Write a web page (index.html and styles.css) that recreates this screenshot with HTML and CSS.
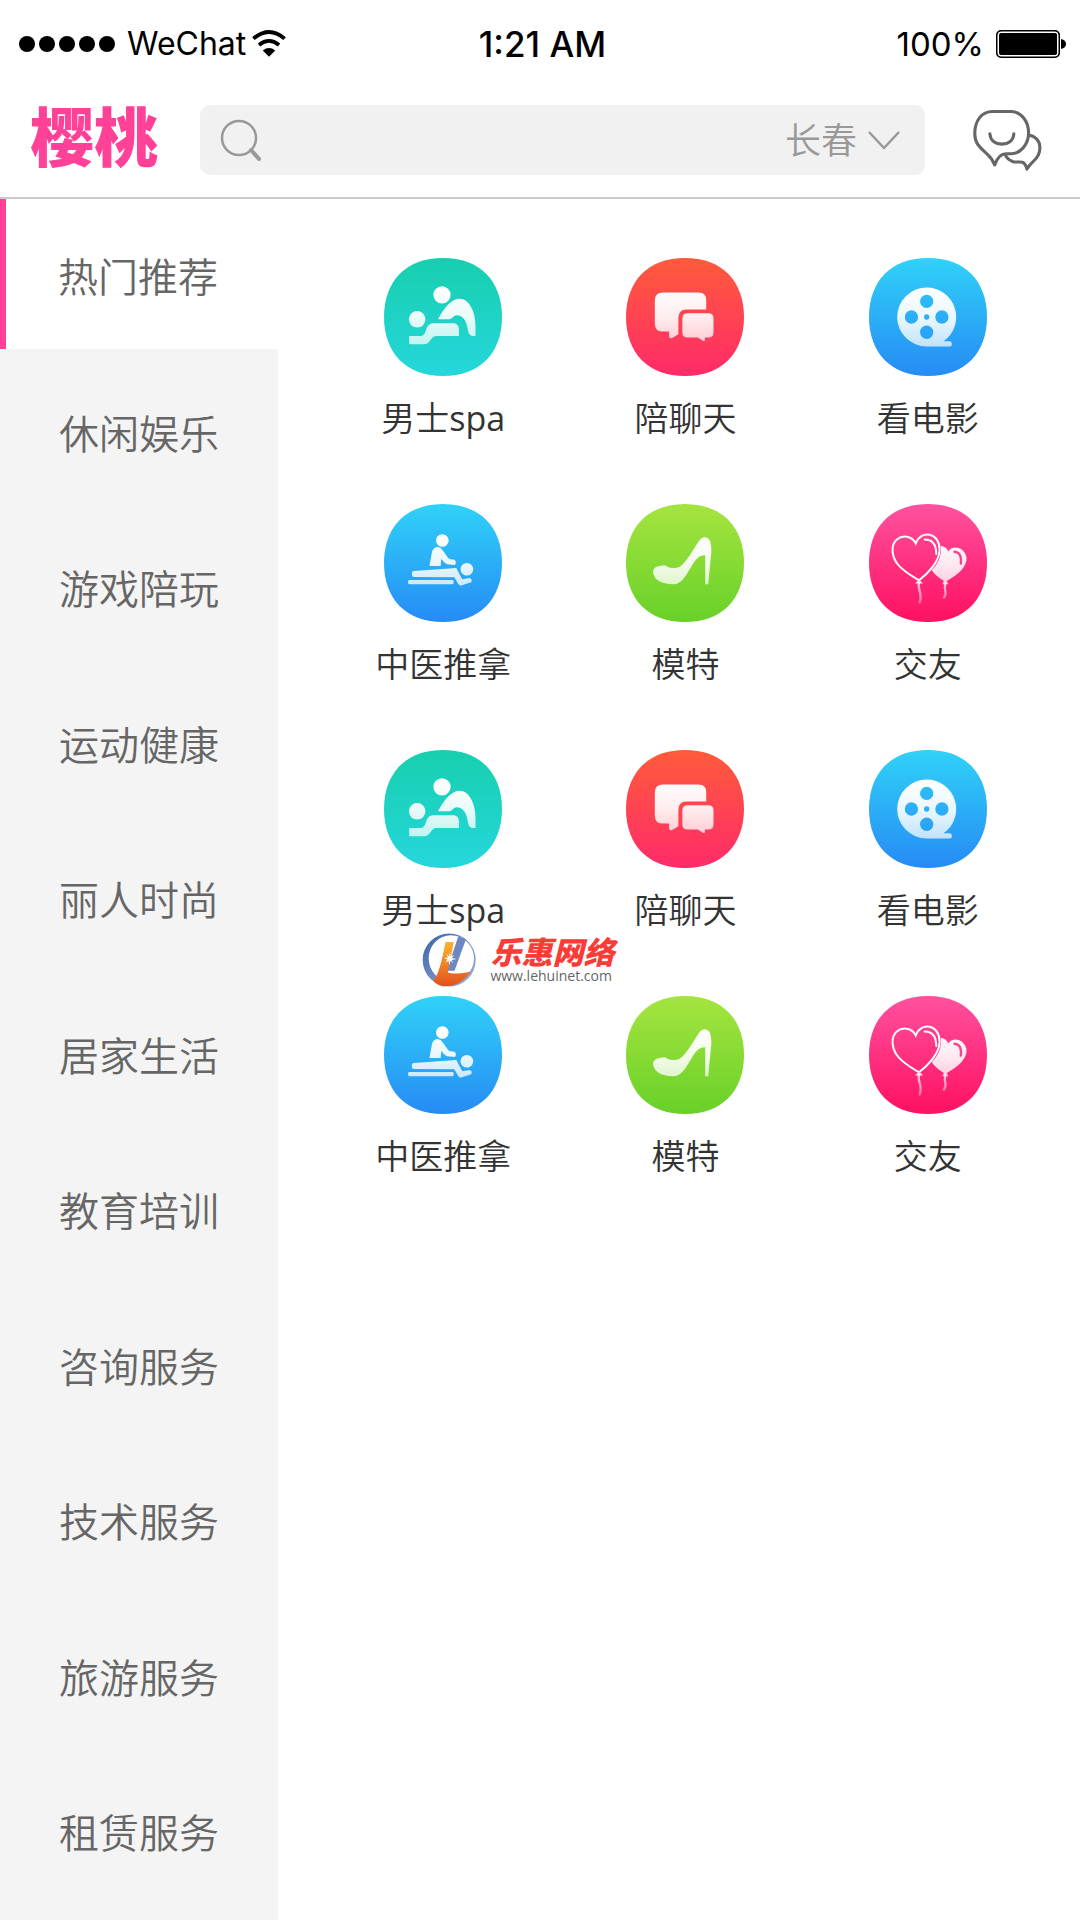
FILE: index.html
```
<!DOCTYPE html>
<html lang="zh-CN">
<head>
    <meta charset="UTF-8">
    <meta name="viewport" content="width=device-width, initial-scale=1.0">
    <title>樱桃</title>
    <link rel="stylesheet" href="styles.css">
</head>
<body>

    <!-- icon definitions -->
    <svg class="defs" width="0" height="0" aria-hidden="true">
        <defs>
            <linearGradient id="teal" x1="0" y1="0" x2="0" y2="1"><stop offset="0" stop-color="#17cfae"/><stop offset="1" stop-color="#25d7dc"/></linearGradient>
            <linearGradient id="red" x1="0" y1="0" x2="0" y2="1"><stop offset="0" stop-color="#ff5b3b"/><stop offset="1" stop-color="#ff2b69"/></linearGradient>
            <linearGradient id="blue" x1="0" y1="0" x2="0" y2="1"><stop offset="0" stop-color="#30d2f8"/><stop offset="1" stop-color="#268bf5"/></linearGradient>
            <linearGradient id="green" x1="0" y1="0" x2="0" y2="1"><stop offset="0" stop-color="#a6e440"/><stop offset="1" stop-color="#68d128"/></linearGradient>
            <linearGradient id="pink" x1="0" y1="0" x2="0" y2="1"><stop offset="0" stop-color="#ff529e"/><stop offset="1" stop-color="#ff1062"/></linearGradient>
            <linearGradient id="glyph" gradientUnits="userSpaceOnUse" x1="0" y1="90" x2="0" y2="270"><stop offset="0" stop-color="#fff"/><stop offset=".5" stop-color="#fff" stop-opacity=".9"/><stop offset="1" stop-color="#fff" stop-opacity=".7"/></linearGradient>
            <linearGradient id="string" gradientUnits="userSpaceOnUse" x1="0" y1="230" x2="0" y2="300"><stop offset="0" stop-color="#fff" stop-opacity=".8"/><stop offset="1" stop-color="#fff" stop-opacity=".35"/></linearGradient>
            <linearGradient id="ring" x1="0" y1="0" x2="1" y2="1"><stop offset="0" stop-color="#3b62a8"/><stop offset="1" stop-color="#9fb3dc"/></linearGradient>
            <linearGradient id="orange" x1="0" y1="0" x2="0" y2="1"><stop offset="0" stop-color="#fbb52c"/><stop offset="1" stop-color="#e2501d"/></linearGradient>
        </defs>

        <path id="tile" d="M178 0C288 0 356 68 356 178C356 288 288 356 178 356C68 356 0 288 0 178C0 68 68 0 178 0Z"/>

        <symbol id="icon-spa" viewBox="0 0 356 356">
            <use href="#tile" fill="url(#teal)"/>
            <g fill="url(#glyph)">
                <circle cx="175" cy="111" r="26"/>
                <circle cx="100" cy="185" r="25"/>
                <path d="M163 185C183 147 205 123 228 123C258 123 276 165 276 203V235H268C254 235 254 220 250 203C245 183 233 173 220 173C210 173 204 185 198 185Z"/>
                <path d="M76 235H108C120 235 122 230 127 217C132 201 139 197 152 197H208C220 197 226 205 226 215V235H160C150 235 147 238 140 248C132 259 128 260 118 260H76Z"/>
            </g>
        </symbol>

        <symbol id="icon-chat" viewBox="0 0 356 356">
            <use href="#tile" fill="url(#red)"/>
            <g fill="url(#glyph)">
                <path d="M112 104H219Q242 104 242 127V155H182Q158 155 158 181V230L138 242Q130 243 130 235V222H112Q87 222 87 198V128Q87 104 112 104Z"/>
                <path d="M186 167H248Q264 167 264 183V224Q264 240 248 240H238V248Q237 252 232 250L217 240H186Q170 240 170 224V183Q170 167 186 167Z"/>
            </g>
        </symbol>

        <symbol id="icon-film" viewBox="0 0 356 356">
            <use href="#tile" fill="url(#blue)"/>
            <path fill="url(#glyph)" fill-rule="evenodd" d="M174 89A89 89 0 0 0 174 267H243Q250 268 250 260Q250 251 243 251H225A89 89 0 0 0 174 89ZM154 131a20 20 0 1 0 40 0a20 20 0 1 0-40 0ZM154 224a20 20 0 1 0 40 0a20 20 0 1 0-40 0ZM108 178a20 20 0 1 0 40 0a20 20 0 1 0-40 0ZM200 178a20 20 0 1 0 40 0a20 20 0 1 0-40 0ZM166 178a8 8 0 1 0 16 0a8 8 0 1 0-16 0Z"/>
        </symbol>

        <symbol id="icon-massage" viewBox="0 0 356 356">
            <use href="#tile" fill="url(#blue)"/>
            <g fill="url(#glyph)">
                <circle cx="176" cy="110" r="19"/>
                <circle cx="250" cy="197" r="19"/>
                <path d="M137 187L145 144Q150 130 162 130Q172 131 178 141L194 164Q198 168 213 168Q220 176 214 184L190 182Q180 177 173 165L171 187Z"/>
                <path d="M90 202L218 193L236 227L258 223Q268 226 263 236L231 247L225 243L212 221L90 220Q84 220 84 211Q84 202 90 202Z"/>
                <rect x="73" y="229" width="137" height="13" rx="4"/>
            </g>
        </symbol>

        <symbol id="icon-shoe" viewBox="0 0 356 356">
            <use href="#tile" fill="url(#green)"/>
            <path fill="url(#glyph)" d="M82 202C84 191 97 186 119 185C127 193 142 197 162 189C184 174 207 129 222 109C230 97 247 97 253 111C258 124 259 144 256 159L248 242H239V155C222 154 212 164 197 189C177 221 167 242 142 242C107 242 80 227 82 202Z"/>
        </symbol>

        <symbol id="icon-hearts" viewBox="0 0 356 356">
            <use href="#tile" fill="url(#pink)"/>
            <path fill="url(#glyph)" d="M217 127C234 129 236 139 240 143C249 124 286 127 294 160C297 190 268 214 235 232L239 242H221L226 232C212 224 199 214 189 200C206 184 220 159 217 127Z"/>
            <path fill="none" stroke="#ff3f8c" stroke-width="7" stroke-linecap="round" d="M258 144Q281 146 277 180"/>
            <g fill="none" stroke="#fff" stroke-width="6" stroke-linecap="round">
                <path d="M141 119C129 94 99 94 84 107C64 124 69 159 86 181C104 204 129 217 151 230C176 212 213 174 213 137C213 86 158 76 141 119Z"/>
                <path d="M168 107Q203 107 203 151"/>
            </g>
            <path fill="#ffe0ec" d="M139 240L151 227L163 240Z"/>
            <g fill="none" stroke="url(#string)" stroke-width="7" stroke-linecap="round">
                <path d="M151 238Q148 250 154 267Q158 284 153 297"/>
                <path d="M230 240Q227 254 231 267Q231 278 226 282"/>
            </g>
        </symbol>
    </svg>

    <div class="status-bar">
        <div class="status-left">
            <span class="signal"><i></i><i></i><i></i><i></i><i></i></span>
            <span class="carrier">WeChat</span>
            <svg class="wifi" viewBox="0 0 98 78" aria-hidden="true">
                <path fill="none" stroke="#000" stroke-width="11" d="M4 25Q49 -13 94 25M20 43Q49 20 78 43"/>
                <path d="M31 59Q49 45 67 59L49 77Z"/>
            </svg>
        </div>
        <div class="status-time">1:21 AM</div>
        <div class="status-right">
            <span>100%</span>
            <svg class="battery" viewBox="0 0 70 28" aria-hidden="true">
                <rect x="1" y="1" width="62" height="26" rx="4" fill="none" stroke="#000" stroke-width="2"/>
                <rect x="3" y="3" width="58" height="22" rx="2"/>
                <rect x="2" y="2" width="60" height="24" rx="3" fill="none" stroke="#fff" stroke-width="1"/>
                <path d="M65 9Q70 10 70 14Q70 18 65 19Z"/>
            </svg>
        </div>
    </div>

    <header class="header">
        <h1 class="logo">樱桃</h1>
        <form class="search">
            <svg class="search-icon" viewBox="0 0 42 42" aria-hidden="true">
                <circle cx="19" cy="19" r="17" fill="none" stroke="#999" stroke-width="2.5"/>
                <path d="M31 31L39 40" stroke="#999" stroke-width="4" stroke-linecap="round"/>
            </svg>
            <input class="search-input" type="search" aria-label="搜索">
            <select class="city" aria-label="城市">
                <option>长春</option>
            </select>
            <svg class="arrow" viewBox="0 0 32 20" aria-hidden="true">
                <path d="M1 2L16 18L31 2" fill="none" stroke="#999" stroke-width="2.5"/>
            </svg>
        </form>
        <button class="message" type="button" aria-label="消息">
            <svg viewBox="0 0 210 190" fill="none" stroke="#666" stroke-width="9" stroke-linecap="round" stroke-linejoin="round" aria-hidden="true">
                <path d="M62 12H118C148 14 168 42 168 74C168 110 142 135 118 135H102C84 135 76 148 69 168C64 154 58 146 48 137C28 117 11 108 11 76C11 38 32 12 62 12Z"/>
                <path d="M55 77C57 98 72 107 90 107C108 107 123 98 125 77"/>
                <path d="M170 81C188 84 201 98 201 118C201 138 192 148 181 158Q168 170 163 180Q159 163 150 160C140 157 130 162 120 157C110 153 104 148 100 138"/>
            </svg>
        </button>
    </header>

    <div class="content">
        <nav class="sidebar">
            <a class="active" href="#">热门推荐</a>
            <ul>
                <li><a href="#">休闲娱乐</a></li>
                <li><a href="#">游戏陪玩</a></li>
                <li><a href="#">运动健康</a></li>
                <li><a href="#">丽人时尚</a></li>
                <li><a href="#">居家生活</a></li>
                <li><a href="#">教育培训</a></li>
                <li><a href="#">咨询服务</a></li>
                <li><a href="#">技术服务</a></li>
                <li><a href="#">旅游服务</a></li>
                <li><a href="#">租赁服务</a></li>
            </ul>
        </nav>

        <main class="services">
            <a href="#"><svg><use href="#icon-spa"/></svg><span>男士<span class="latin">spa</span></span></a>
            <a href="#"><svg><use href="#icon-chat"/></svg>陪聊天</a>
            <a href="#"><svg><use href="#icon-film"/></svg>看电影</a>
            <a href="#"><svg><use href="#icon-massage"/></svg>中医推拿</a>
            <a href="#"><svg><use href="#icon-shoe"/></svg>模特</a>
            <a href="#"><svg><use href="#icon-hearts"/></svg>交友</a>
            <a href="#"><svg><use href="#icon-spa"/></svg><span>男士<span class="latin">spa</span></span></a>
            <a href="#"><svg><use href="#icon-chat"/></svg>陪聊天</a>
            <a href="#"><svg><use href="#icon-film"/></svg>看电影</a>
            <a href="#"><svg><use href="#icon-massage"/></svg>中医推拿</a>
            <a href="#"><svg><use href="#icon-shoe"/></svg>模特</a>
            <a href="#"><svg><use href="#icon-hearts"/></svg>交友</a>
        </main>
    </div>

    <div class="watermark">
        <svg viewBox="0 0 164 164" aria-hidden="true">
            <path fill="url(#ring)" fill-rule="evenodd" d="M81 3A79 79 0 1 0 81 161A79 79 0 1 0 81 3ZM86 8A66 66 0 1 1 86 146A66 69 0 1 1 86 8Z"/>
            <path fill="#6c87c2" d="M108 12L131 20L97 114H74Z"/>
            <path fill="url(#orange)" d="M70 28H95L77 118C76 124 120 124 145 116C125 148 95 162 62 160C48 158 38 150 33 144C50 125 58 90 70 28Z"/>
            <path fill="#fff" d="M83 58L86 72L97 66L89 76L103 79L88 82L94 92L85 84L82 98L79 84L69 90L76 80L65 77L78 74L71 64L81 71Z"/>
        </svg>
        <div>
            <strong>乐惠网络</strong>
            <span>www.lehuinet.com</span>
        </div>
    </div>

</body>
</html>
```
FILE: styles.css
```
* {
    box-sizing: border-box;
}
body {
    position: relative;
    display: flex;
    flex-direction: column;
    min-height: 100vh;
    margin: 0;
    background-color: #fff;
    font-family: "Open Sans", "Noto Sans CJK SC", sans-serif;
}
a {
    color: inherit;
    text-decoration: none;
}
.defs {
    position: absolute;
}

/* status bar */
.status-bar {
    display: grid;
    grid-template-columns: 1fr auto 1fr;
    align-items: center;
    height: 87px;
    padding: 0 14px 0 19px;
    font-family: Inter, sans-serif;
    font-size: 33px;
}
.status-left, .status-right {
    display: flex;
    align-items: center;
}
.status-right {
    justify-content: flex-end;
    gap: 12px;
}
.status-time {
    font-size: 35px;
    font-weight: 500;
}
.carrier {
    font-size: 32px;
}
.signal {
    display: flex;
    gap: 4px;
    margin-right: 12px;
}
.signal i {
    width: 16px;
    height: 16px;
    border-radius: 50%;
    background-color: #000;
}
.wifi {
    width: 34px;
    height: 27px;
    margin-left: 6px;
}
.battery {
    width: 70px;
    height: 28px;
}

/* header */
.header {
    display: flex;
    align-items: center;
    padding: 18px 37px 22px 30px;
    border-bottom: 2px solid #c9c9c9;
}
.logo {
    margin: 0 42px 6px 0;
    color: #ff4298;
    font-size: 64px;
    font-weight: 900;
    line-height: 62px;
}
.search {
    display: flex;
    flex: 1;
    align-items: center;
    height: 70px;
    padding: 0 25px 0 20px;
    border-radius: 10px;
    background-color: #f1f1f1;
}
.search-icon {
    width: 42px;
    height: 42px;
}
.search-input {
    flex: 1;
    min-width: 0;
    height: 70px;
    border: none;
    outline: none;
    background: none;
    font-size: 36px;
}
.city {
    padding: 0;
    border: none;
    appearance: none;
    background: none;
    color: #999;
    font-family: inherit;
    font-size: 36px;
    font-weight: 350;
}
.arrow {
    width: 32px;
    height: 20px;
    margin-left: 10px;
}
.message {
    width: 72px;
    height: 66px;
    margin-left: 46px;
    padding: 0;
    border: none;
    background: none;
    cursor: pointer;
}
.message svg {
    display: block;
    width: 100%;
    height: 100%;
}

/* categories */
.content {
    display: flex;
    flex: 1;
}
.sidebar {
    display: flex;
    flex-direction: column;
    width: 278px;
    background-color: #f4f4f4;
    color: #666;
    font-size: 40px;
    font-weight: 350;
    line-height: 56px;
    text-align: center;
}
.sidebar .active {
    padding: 50px 8px 44px 0;
    border-left: 6px solid #ff4298;
    background-color: #fff;
}
.sidebar ul {
    display: grid;
    flex: 1;
    grid-auto-rows: 1fr;
    align-items: center;
    margin: 0;
    padding: 7px 0 9px;
    list-style: none;
}
.sidebar li a {
    display: block;
}

/* services */
.services {
    display: grid;
    flex: 1;
    grid-template-columns: repeat(3, 1fr);
    align-content: start;
    row-gap: 62px;
    padding: 59px 31px 60px 44px;
}
.services a {
    display: flex;
    flex-direction: column;
    align-items: center;
    color: #333;
    font-size: 34px;
    font-weight: 350;
    line-height: 48px;
}
.services .latin {
    font-weight: 400;
}
.services svg {
    width: 118px;
    height: 118px;
    margin-bottom: 18px;
}

/* watermark */
.watermark {
    position: absolute;
    top: 50%;
    left: 48%;
    display: flex;
    align-items: center;
    gap: 13px;
    transform: translate(-50%, -50%);
}
.watermark svg {
    width: 55px;
    height: 55px;
}
.watermark strong {
    display: block;
    color: #fb3b35;
    font-size: 31px;
    font-style: italic;
    font-weight: 900;
    line-height: 30px;
}
.watermark span {
    display: block;
    color: #666;
    font-size: 14px;
    line-height: 18px;
}
```
